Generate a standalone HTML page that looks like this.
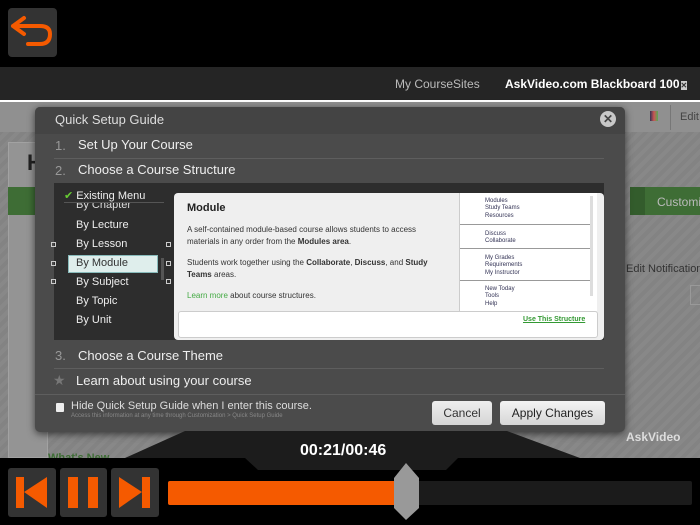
<!DOCTYPE html>
<html><head><meta charset="utf-8"><style>
*{margin:0;padding:0;box-sizing:border-box}
body{width:700px;height:525px;overflow:hidden;background:#000;font-family:"Liberation Sans",sans-serif;position:relative}
.a{position:absolute}
.t{position:absolute;white-space:nowrap}
</style></head><body>
<div class="a" style="left:8px;top:8px;width:49px;height:49px;background:#333;border-radius:4px"></div>
<svg class="a" style="left:8px;top:8px" width="49" height="49"><path d="M5 18 L16 10 M5 18 L16 26 M5 18 H32 Q42 18 42 26 Q42 36 32 36 H20" fill="none" stroke="#f55a00" stroke-width="4" stroke-linecap="round" stroke-linejoin="round"/></svg>
<div class="a" style="left:0;top:67px;width:700px;height:33px;background:#252525"></div>
<div class="t" style="left:395px;top:77px;color:#bbb;font-size:12px">My CourseSites</div>
<div class="t" style="left:505px;top:77px;color:#fff;font-size:12px;font-weight:bold">AskVideo.com Blackboard 100<span style="font-size:8px;background:#ccc;color:#333;margin-left:1px">✕</span></div>
<div class="a" style="left:0;top:100px;width:700px;height:2px;background:#fff"></div>
<div class="a" style="left:0;top:102px;width:700px;height:356px;background:repeating-linear-gradient(135deg,#888 0 4px,#838383 4px 8px)"></div>
<div class="a" style="left:0;top:102px;width:700px;height:30px;background:#909090"></div>
<div class="a" style="left:8px;top:142px;width:40px;height:316px;background:#949494;border:1px solid #a2a2a2"></div>
<div class="t" style="left:27px;top:150px;color:#222;font-size:22px;font-weight:bold">H</div>
<div class="a" style="left:8px;top:187px;width:30px;height:28px;background:#3e6d35"></div>
<div class="a" style="left:630px;top:187px;width:70px;height:28px;background:#3e6d35"></div>
<div class="a" style="left:630px;top:187px;width:15px;height:28px;background:#335c2c"></div>
<div class="t" style="left:657px;top:195px;color:#bbb;font-size:12px">Customi</div>
<div class="t" style="left:650px;top:111px;width:8px;height:10px;background:linear-gradient(90deg,#335,#c55,#5a5)"></div>
<div class="a" style="left:670px;top:105px;width:1px;height:25px;background:#777"></div>
<div class="t" style="left:680px;top:111px;color:#444;font-size:11px">Edit</div>
<div class="t" style="left:626px;top:263px;color:#333;font-size:11px">Edit Notification</div>
<div class="a" style="left:690px;top:285px;width:15px;height:20px;border:1px solid #999"></div>
<div class="t" style="left:626px;top:430px;color:#ddd;font-size:12px;font-weight:bold">AskVideo</div>
<div class="t" style="left:48px;top:452px;color:#3e6d35;font-size:11px;font-weight:bold">What's New</div>
<div class="a" style="left:35px;top:107px;width:590px;height:325px;background:#4b4b4b;border-radius:5px;box-shadow:0 2px 8px rgba(0,0,0,.6)"></div>
<div class="a" style="left:35px;top:107px;width:590px;height:27px;background:#444;border-radius:5px 5px 0 0"></div>
<div class="t" style="left:55px;top:112px;color:#ddd;font-size:13px">Quick Setup Guide</div>
<div class="a" style="left:600px;top:111px;width:16px;height:16px;border-radius:50%;background:#c8c8c8;color:#444;font-size:12px;font-weight:bold;text-align:center;line-height:16px">✕</div>
<div class="t" style="left:55px;top:138px;color:#999;font-size:13px">1.</div>
<div class="t" style="left:78px;top:137px;color:#eee;font-size:13px">Set Up Your Course</div>
<div class="a" style="left:54px;top:158px;width:550px;height:1px;background:#5e5e5e"></div>
<div class="t" style="left:55px;top:163px;color:#999;font-size:13px">2.</div>
<div class="t" style="left:78px;top:162px;color:#eee;font-size:13px">Choose a Course Structure</div>
<div class="a" style="left:54px;top:183px;width:550px;height:157px;background:#2d2d2d"></div>
<div class="t" style="left:64px;top:189px;color:#eee;font-size:11px"><span style="color:#6c3">✔</span> Existing Menu</div>
<div class="a" style="left:64px;top:202px;width:100px;height:1px;background:#555"></div>
<div class="t" style="left:76px;top:203px;color:#ddd;font-size:11px;height:9px;overflow:hidden;line-height:4px">By Chapter</div>
<div class="t" style="left:76px;top:219px;color:#eee;font-size:11px">By Lecture</div>
<div class="t" style="left:76px;top:238px;color:#eee;font-size:11px">By Lesson</div>
<div class="a" style="left:68px;top:255px;width:90px;height:18px;background:#dfeeec;border:1px solid #8bb"></div>
<div class="t" style="left:76px;top:257px;color:#333;font-size:11px">By Module</div>
<div class="t" style="left:76px;top:276px;color:#eee;font-size:11px">By Subject</div>
<div class="t" style="left:76px;top:295px;color:#eee;font-size:11px">By Topic</div>
<div class="t" style="left:76px;top:314px;color:#eee;font-size:11px">By Unit</div>
<div class="a" style="left:161px;top:258px;width:3px;height:22px;background:#555"></div>
<div class="a" style="left:51px;top:242px;width:5px;height:5px;border:1px solid #ccc"></div>
<div class="a" style="left:51px;top:261px;width:5px;height:5px;border:1px solid #ccc"></div>
<div class="a" style="left:51px;top:279px;width:5px;height:5px;border:1px solid #ccc"></div>
<div class="a" style="left:166px;top:242px;width:5px;height:5px;border:1px solid #ccc"></div>
<div class="a" style="left:166px;top:261px;width:5px;height:5px;border:1px solid #ccc"></div>
<div class="a" style="left:166px;top:279px;width:5px;height:5px;border:1px solid #ccc"></div>
<div class="a" style="left:174px;top:193px;width:430px;height:147px;background:#efefef;border-radius:4px"></div>
<div class="a" style="left:459px;top:193px;width:138px;height:118px;background:#fff;border-left:1px solid #ccc"></div>
<div class="a" style="left:590px;top:196px;width:3px;height:100px;background:#ddd"></div>
<div class="t" style="left:485px;top:198px;color:#335;font-size:6px;line-height:7.3px">Modules<br>Study Teams<br>Resources</div>
<div class="a" style="left:460px;top:224px;width:130px;height:1px;background:#999"></div>
<div class="t" style="left:485px;top:231px;color:#335;font-size:6px;line-height:7.3px">Discuss<br>Collaborate</div>
<div class="a" style="left:460px;top:248px;width:130px;height:1px;background:#999"></div>
<div class="t" style="left:485px;top:255px;color:#335;font-size:6px;line-height:7.3px">My Grades<br>Requirements<br>My Instructor</div>
<div class="a" style="left:460px;top:280px;width:130px;height:1px;background:#999"></div>
<div class="t" style="left:485px;top:286px;color:#335;font-size:6px;line-height:7.3px">New Today<br>Tools<br>Help</div>
<div class="t" style="left:187px;top:202px;color:#222;font-size:11px;font-weight:bold">Module</div>
<div class="t" style="left:187px;top:224px;color:#333;font-size:8px;line-height:12px">A self-contained module-based course allows students to access<br>materials in any order from the <b>Modules area</b>.</div>
<div class="t" style="left:187px;top:257px;color:#333;font-size:8px;line-height:12px">Students work together using the <b>Collaborate</b>, <b>Discuss</b>, and <b>Study<br>Teams</b> areas.</div>
<div class="t" style="left:187px;top:291px;color:#333;font-size:8px"><span style="color:#4a4">Learn more</span> about course structures.</div>
<div class="a" style="left:178px;top:311px;width:420px;height:27px;background:#fff;border:1px solid #ccc;border-radius:3px"></div>
<div class="t" style="left:523px;top:316px;color:#393;font-size:7px;font-weight:bold;text-decoration:underline">Use This Structure</div>
<div class="t" style="left:55px;top:348px;color:#999;font-size:13px">3.</div>
<div class="t" style="left:78px;top:348px;color:#eee;font-size:13px">Choose a Course Theme</div>
<div class="a" style="left:54px;top:368px;width:550px;height:1px;background:#5e5e5e"></div>
<div class="t" style="left:53px;top:372px;color:#777;font-size:14px">★</div>
<div class="t" style="left:76px;top:373px;color:#eee;font-size:13px">Learn about using your course</div>
<div class="a" style="left:35px;top:394px;width:590px;height:1px;background:#5e5e5e"></div>
<div class="a" style="left:56px;top:403px;width:8px;height:9px;background:#eee;border-radius:1px"></div>
<div class="t" style="left:71px;top:400px;color:#ddd;font-size:11px">Hide Quick Setup Guide when I enter this course.</div>
<div class="t" style="left:71px;top:413px;color:#888;font-size:6px">Access this information at any time through Customization &gt; Quick Setup Guide</div>
<div class="a" style="left:432px;top:401px;width:60px;height:24px;background:linear-gradient(#eee,#d6d6d6);border-radius:3px;color:#333;font-size:12px;text-align:center;line-height:24px">Cancel</div>
<div class="a" style="left:500px;top:401px;width:105px;height:24px;background:linear-gradient(#f3f3f3,#d6d6d6);border-radius:3px;color:#222;font-size:12px;text-align:center;line-height:24px">Apply Changes</div>
<div class="a" style="left:0;top:458px;width:700px;height:67px;background:#000"></div>
<svg class="a" style="left:0;top:0" width="700" height="525"><polygon points="125,458 185,431 507,431 580,458 458,458 446,470 258,470 245,458" fill="#1c1c1c"/></svg>
<div class="t" style="left:300px;top:442px;color:#fff;font-size:16px;font-weight:bold">00:21/00:46</div>
<div class="a" style="left:8px;top:468px;width:48px;height:49px;background:#333;border-radius:3px"></div>
<div class="a" style="left:60px;top:468px;width:47px;height:49px;background:#333;border-radius:3px"></div>
<div class="a" style="left:111px;top:468px;width:48px;height:49px;background:#333;border-radius:3px"></div>
<svg class="a" style="left:0;top:0" width="700" height="525">
<rect x="16" y="477" width="8" height="31" fill="#f55a00"/><polygon points="24,492 47,477 47,508" fill="#f55a00"/>
<rect x="68" y="477" width="10" height="31" fill="#f55a00"/><rect x="88" y="477" width="10" height="31" fill="#f55a00"/>
<polygon points="119,477 142,492 119,508" fill="#f55a00"/><rect x="142" y="477" width="8" height="31" fill="#f55a00"/>
<rect x="168" y="481" width="524" height="24" rx="2" fill="#1b1b1b"/>
<rect x="168" y="481" width="230" height="24" rx="2" fill="#f55a00"/>
<polygon points="406,463 419,478 419,508 406,520 394,508 394,478" fill="#999"/>
</svg>
</body></html>
